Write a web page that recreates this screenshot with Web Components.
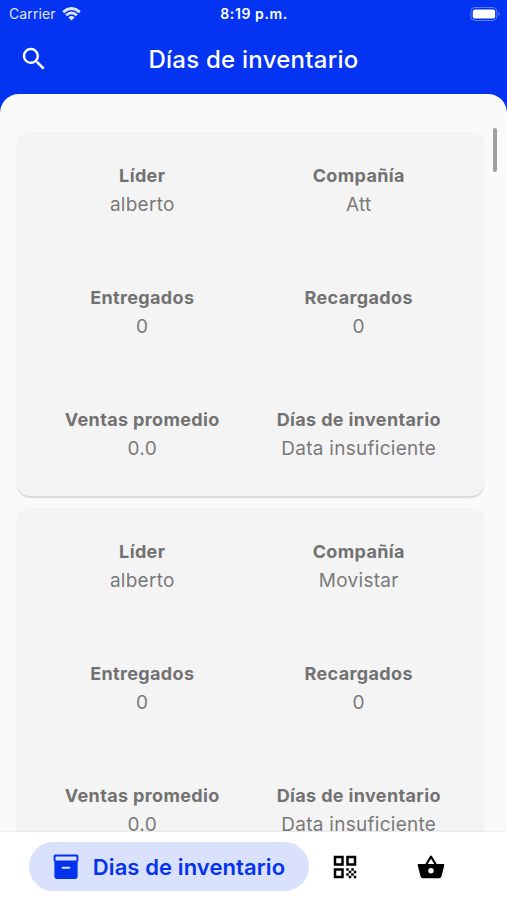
<!DOCTYPE html>
<html lang="es">
<head>
<meta charset="utf-8">
<title>Días de inventario</title>
<style>
html,body{margin:0;height:100%;overflow:hidden}
</style>
</head>
<body>
<inventory-app></inventory-app>
<script>
class Base extends HTMLElement {
  constructor() {
    super();
    this.attachShadow({ mode: 'open' }).innerHTML = this.view();
  }
}

customElements.define('status-bar', class extends Base {
  view() { return `<style>
    :host{display:grid;grid-template-columns:1fr auto 1fr;align-items:center;height:27px;padding:0 6px 0 9px;color:#fff;font-size:14px;line-height:18px}
    .left{display:flex;align-items:center;gap:6px;opacity:.88;letter-spacing:.1px}
    .time{font-weight:600;font-size:14px;letter-spacing:.6px;margin-right:2px}
    .right{display:flex;justify-content:flex-end}
    svg{display:block}
  </style>
  <div class="left"><span>Carrier</span>
    <svg width="19" height="14" viewBox="0 0 19 14" fill="none" stroke="#fff" stroke-width="2.8"><path d="M1.2 5.1Q9.5-2.2 17.8 5.1"/><path d="M4.1 8.3Q9.5 3.5 14.9 8.3"/><path d="M6.4 10.4Q9.5 7.8 12.6 10.4L9.5 13.6Z" fill="#fff" stroke="none"/></svg>
  </div>
  <div class="time">8:19 p.m.</div>
  <div class="right"><svg width="31" height="14" viewBox="0 0 31 14"><rect x=".9" y=".5" width="26" height="13" rx="4" fill="none" stroke="#fff" stroke-opacity=".35"/><rect x="2.8" y="2.4" width="22.3" height="9.2" rx="2.2" fill="#fff"/><path d="M28.5 4.7q2 2.3 0 4.6z" fill="#fff" fill-opacity=".45"/></svg></div>`; }
});

customElements.define('app-header', class extends Base {
  view() { return `<style>
    :host{display:grid;grid-template-columns:52px 1fr 52px;align-items:center;height:66px;color:#fff}
    svg{display:block;justify-self:end;margin:-2px 3px 0 0}
    h1{margin:0;text-align:center;font-size:24px;line-height:30px;font-weight:500;letter-spacing:.24px}
  </style>
  <svg width="30" height="30" viewBox="0 0 24 24" fill="#fff"><path d="M15.5 14h-.79l-.28-.27A6.47 6.47 0 0 0 16 9.5 6.5 6.5 0 1 0 9.5 16c1.61 0 3.09-.59 4.23-1.57l.27.28v.79l5 4.99L20.49 19l-4.99-5zm-6 0C7.01 14 5 11.99 5 9.5S7.01 5 9.5 5 14 7.01 14 9.5 11.99 14 9.5 14z"/></svg>
  <h1><slot></slot></h1>`; }
});

customElements.define('data-field', class extends Base {
  view() { return `<style>
    :host{display:block;height:122px;text-align:center;color:#7a7a7a;font-size:19px;line-height:30px;white-space:nowrap}
    .label{font-weight:700;font-size:18px;letter-spacing:.36px;line-height:29px;color:#727272}
    .value{letter-spacing:.27px}
  </style><div class="label"><slot name="label"></slot></div><div class="value"><slot></slot></div>`; }
});

customElements.define('inventory-card', class extends Base {
  view() { return `<style>
    :host{display:grid;grid-template-columns:1fr 1fr;align-content:start;box-sizing:border-box;flex:none;height:364px;padding:29px 17px 0;overflow:hidden;border-radius:13px;background:#f4f4f4;box-shadow:0 1.5px 1px rgba(0,0,0,.13)}
  </style><slot></slot>`; }
});

customElements.define('scroll-thumb', class extends Base {
  view() { return `<style>:host{position:absolute;right:10px;top:34px;width:4px;height:44px;border-radius:2px;background:#a0a0a0}</style>`; }
});

customElements.define('nav-item', class extends Base {
  view() { return `<style>
    :host{display:flex;align-items:center;justify-content:center;height:49px;color:#000}
    :host([active]){box-sizing:border-box;width:280px;padding-right:1px;gap:13px;border-radius:25px;background:#d9e1fd;color:#0433ef;font-size:22px;font-weight:600;white-space:nowrap}
  </style><slot name="icon"></slot><slot></slot>`; }
});

customElements.define('bottom-nav', class extends Base {
  view() { return `<style>
    :host{display:flex;align-items:flex-start;box-sizing:border-box;flex:none;height:68px;padding:10px 0 0 29px;background:#fff;box-shadow:0 -1px 2px rgba(0,0,0,.06);position:relative}
    .qr{margin-left:21px}.basket{margin-left:57px}
    .label{letter-spacing:.1px}
    svg{display:block}
  </style>
  <nav-item active>
    <svg slot="icon" width="28" height="28" viewBox="0 0 28 28"><path fill="#0433ef" fill-rule="evenodd" d="M3.2 1.6H24.8Q26.4 1.6 26.4 3.2V7.4Q26.4 9 24.8 9H3.2Q1.6 9 1.6 7.4V3.2Q1.6 1.6 3.2 1.6ZM4.1 3.4Q3.5 3.4 3.5 4V6.8Q3.5 7.4 4.1 7.4H23.9Q24.5 7.4 24.5 6.8V4Q24.5 3.4 23.9 3.4Z"/><path fill="#0433ef" fill-rule="evenodd" d="M2.4 8.5H25.6V23.3Q25.6 26 22.9 26H5.1Q2.4 26 2.4 23.3ZM10.6 13.7Q9.7 13.7 9.7 14.7T10.6 15.7H17.4Q18.3 15.7 18.3 14.7T17.4 13.7Z"/></svg>
    <span class="label">Dias de inventario</span>
  </nav-item>
  <nav-item class="qr"><svg slot="icon" width="30" height="30" viewBox="0 0 24 24"><path d="M3 11h8V3H3v8zm2-6h4v4H5V5zM3 21h8v-8H3v8zm2-6h4v4H5v-4zM13 3v8h8V3h-8zm6 6h-4V5h4v4zM19 19h2v2h-2zM13 13h2v2h-2zM15 15h2v2h-2zM13 17h2v2h-2zM15 19h2v2h-2zM17 17h2v2h-2zM17 13h2v2h-2zM19 15h2v2h-2z"/></svg></nav-item>
  <nav-item class="basket"><svg slot="icon" width="28" height="26" viewBox="0 0 28 26"><path d="M8.6 11.5L14 2.6L19.4 11.5" fill="none" stroke="#000" stroke-width="2.1" stroke-linejoin="round"/><path fill-rule="evenodd" d="M1.6 10H26.4Q27.6 10 27.3 11.3L24.5 22.3Q24 24.2 22.2 24.2H5.8Q4 24.2 3.5 22.3L.7 11.3Q.4 10 1.6 10ZM14 14.1a2.7 2.7 0 1 0 0 5.4a2.7 2.7 0 1 0 0-5.4Z"/></svg></nav-item>`; }
});

const card = (company) => `<inventory-card>
  <data-field><span slot="label">Líder</span>alberto</data-field>
  <data-field><span slot="label">Compañía</span>${company}</data-field>
  <data-field><span slot="label">Entregados</span>0</data-field>
  <data-field><span slot="label">Recargados</span>0</data-field>
  <data-field><span slot="label">Ventas promedio</span>0.0</data-field>
  <data-field><span slot="label">Días de inventario</span>Data insuficiente</data-field>
</inventory-card>`;

customElements.define('inventory-app', class extends Base {
  view() { return `<style>
    :host{display:flex;flex-direction:column;height:900px;width:507px;overflow:hidden;background:#0434f1;font-family:Inter,"Liberation Sans",sans-serif}
    main{position:relative;flex:1;min-height:0;overflow:hidden;box-sizing:border-box;display:flex;flex-direction:column;gap:12px;padding:38px 23px 0 17px;margin-top:1px;border-radius:19px 19px 0 0;background:#fafafa}
  </style>
  <status-bar></status-bar>
  <app-header>Días de inventario</app-header>
  <main>${card('Att')}${card('Movistar')}<scroll-thumb></scroll-thumb></main>
  <bottom-nav></bottom-nav>`; }
});
</script>
</body>
</html>
